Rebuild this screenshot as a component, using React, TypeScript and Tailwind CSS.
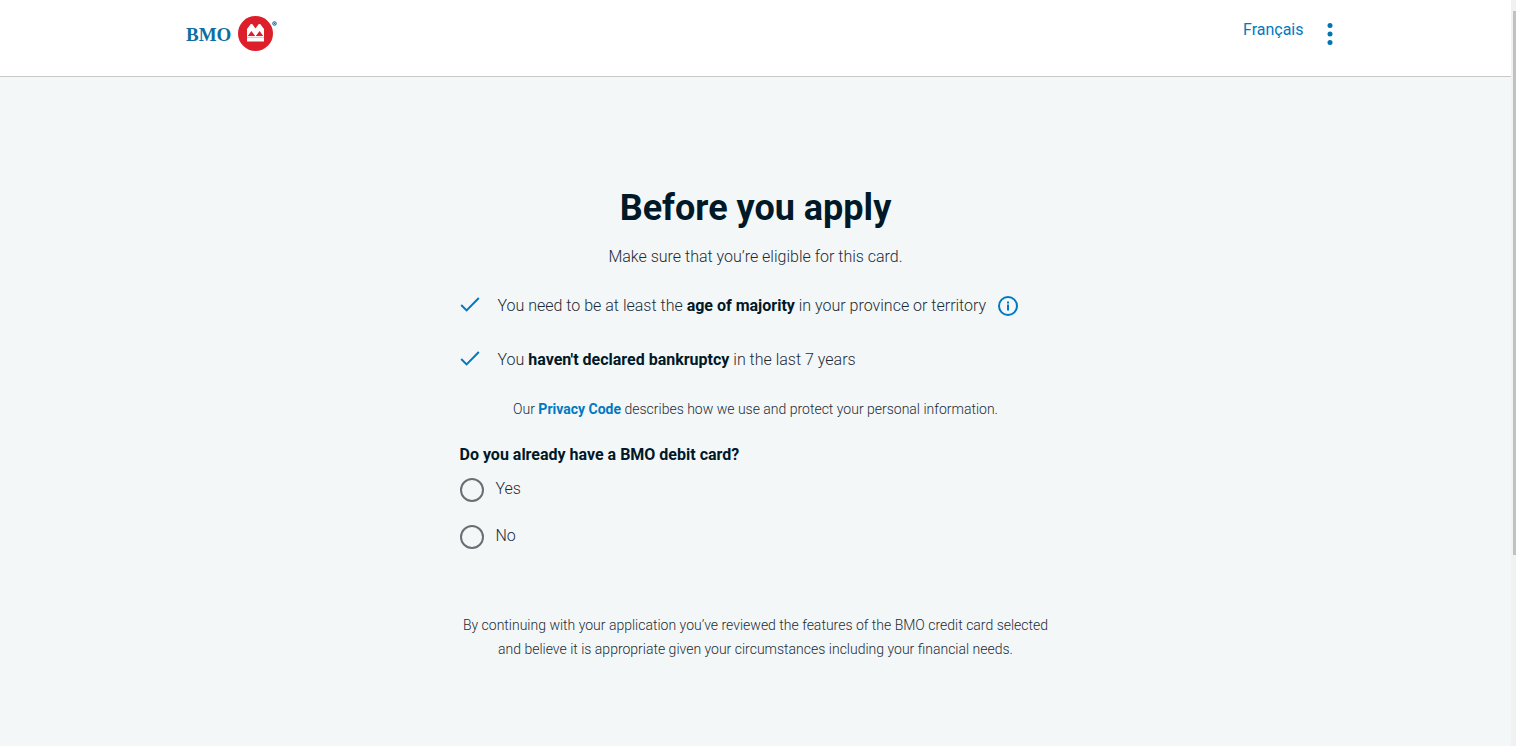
import React from "react";

type OptionProps = {
  id: string;
  label: string;
};

type RequirementProps = {
  children: React.ReactNode;
};

const Logo: React.FC = () => {
  return (
    <a href="#" aria-label="BMO home" className="block">
      <svg width="94" height="36" viewBox="0 0 94 36">
        <text
          x="0"
          y="25"
          fontFamily="'Liberation Serif', serif"
          fontWeight="700"
          fontSize="19"
          fill="#0c6fa3"
        >
          BMO
        </text>
        <circle cx="69.5" cy="17.5" r="17.5" fill="#dc1f2b" />
        <path
          d="M61 25.5 V13 L64.8 8 H66.2 L69.5 12.4 L72.8 8 H74.2 L78 13 V25.5 Z"
          fill="#fff"
        />
        <path
          d="M61.8 20 L65.4 15 L69.2 20 Z M69.8 20 L73.6 15 L77.2 20 Z"
          fill="#dc1f2b"
        />
        <path d="M61 21.4 H78" stroke="#f09ca2" strokeWidth="0.7" />
        <circle cx="88.5" cy="7.5" r="1.8" fill="#cfe4f0" stroke="#0c6fa3" strokeWidth="1" />
        <circle cx="88.5" cy="7.5" r="0.7" fill="#0c6fa3" />
      </svg>
    </a>
  );
};

const Header: React.FC = () => {
  return (
    <header className="bg-white border-b border-[#c8c8c8]">
      <div className="flex items-start justify-between max-w-[1172px] h-19 mx-auto pt-4 pl-4 pr-[2px]">
        <Logo />
        <div className="flex items-start gap-4">
          <a href="#" className="text-base leading-7 font-normal text-[#0079c1]">
            Français
          </a>
          <button type="button" aria-label="Menu" className="flex justify-center w-5 pt-1">
            <svg width="6" height="28" viewBox="0 0 6 28" fill="#0075b0">
              <circle cx="3" cy="5.5" r="2.5" />
              <circle cx="3" cy="14" r="2.5" />
              <circle cx="3" cy="22.5" r="2.5" />
            </svg>
          </button>
        </div>
      </div>
    </header>
  );
};

const Requirement: React.FC<RequirementProps> = ({ children }: RequirementProps) => {
  return (
    <li className="flex items-start gap-4">
      <svg width="22" height="22" viewBox="0 0 22 22" fill="none" className="shrink-0">
        <path d="M1.2 11 L6.6 16.4 L18.8 4" stroke="#0079c1" strokeWidth="2" />
      </svg>
      <div className="flex items-center gap-3">{children}</div>
    </li>
  );
};

const Option: React.FC<OptionProps> = ({ id, label }: OptionProps) => {
  return (
    <div className="flex items-end gap-3">
      <input
        type="radio"
        id={id}
        name="debit-card"
        className="appearance-none w-6 h-6 rounded-full border-2 border-[#6b6e73] checked:border-8 checked:border-[#0079c1]"
      />
      <label htmlFor={id} className="pb-px leading-6">
        {label}
      </label>
    </div>
  );
};

const App: React.FC = () => {
  return (
    <div className="flex min-h-screen bg-[#f4f7f8] font-['Roboto',sans-serif] text-base font-light text-[#1c2c36]">
      <div className="flex-1">
        <Header />
        <main className="max-w-[592px] mx-auto pt-[107px] pb-20">
          <h1 className="text-4xl leading-12 font-bold text-center text-[#001928]">
            Before you apply
          </h1>
          <p className="mt-[13px] leading-6 text-center">
            Make sure that you’re eligible for this card.
          </p>
          <ul className="flex flex-col gap-[30px] mt-[25px]">
            <Requirement>
              <p className="leading-6">
                You need to be at least the{" "}
                <strong className="font-bold text-[#001928]">age of majority</strong> in your
                province or territory
              </p>
              <button type="button" aria-label="More about age of majority">
                <svg width="20" height="20" viewBox="0 0 20 20" fill="none">
                  <circle cx="10" cy="10" r="9" stroke="#0079c1" strokeWidth="2" />
                  <path d="M10 8.5 V14.5" stroke="#0079c1" strokeWidth="2" />
                  <path d="M10 5.5 V7.5" stroke="#0079c1" strokeWidth="2" />
                </svg>
              </button>
            </Requirement>
            <Requirement>
              <p className="leading-6">
                You{" "}
                <strong className="font-bold text-[#001928]">haven't declared bankruptcy</strong>{" "}
                in the last 7 years
              </p>
            </Requirement>
          </ul>
          <p className="mt-[25px] text-sm leading-6 text-center">
            Our{" "}
            <a href="#" className="font-bold text-[#0079c1]">
              Privacy Code
            </a>{" "}
            describes how we use and protect your personal information.
          </p>
          <fieldset className="mt-[22px]">
            <legend className="font-bold leading-6 text-[#001928]">
              Do you already have a BMO debit card?
            </legend>
            <div className="flex flex-col gap-[22px] pt-[10px]">
              <Option id="debit-yes" label="Yes" />
              <Option id="debit-no" label="No" />
            </div>
          </fieldset>
          <p className="mt-16 text-sm leading-6 text-center">
            By continuing with your application you’ve reviewed the features of the BMO credit card
            selected and believe it is appropriate given your circumstances including your
            financial needs.
          </p>
        </main>
      </div>
      <div aria-hidden="true" className="w-[5px] bg-[#f1f1f1] pt-[11px] pl-[2px]">
        <div className="h-[74%] bg-[#c1c1c1]" />
      </div>
    </div>
  );
};

export default App;
